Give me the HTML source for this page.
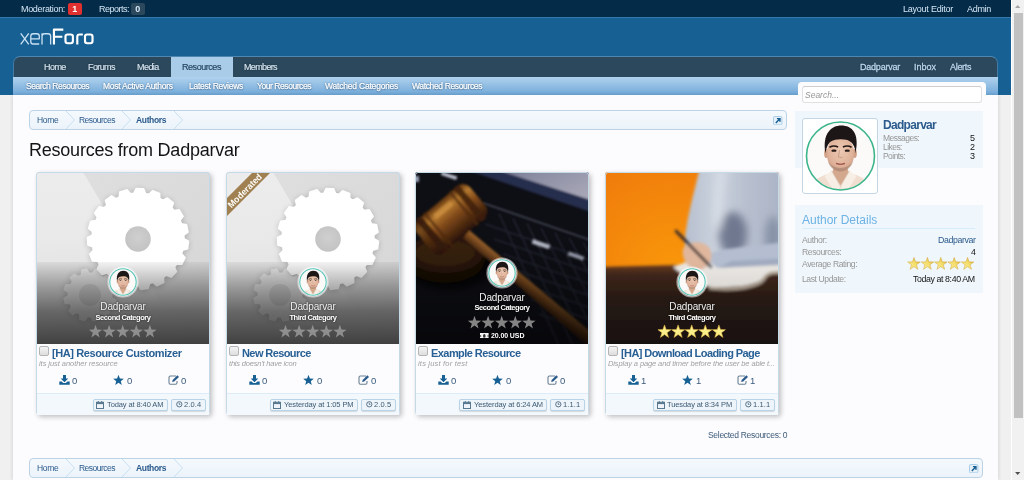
<!DOCTYPE html>
<html>
<head>
<meta charset="utf-8">
<title>Resources from Dadparvar</title>
<style>
html,body{margin:0;padding:0;}
body{width:1024px;height:480px;overflow:hidden;position:relative;background:#f0f0f0;-webkit-font-smoothing:antialiased;font-family:"Liberation Sans",sans-serif;font-size:11px;color:#141414;}
.abs{position:absolute;}
.t{position:absolute;white-space:nowrap;line-height:1;will-change:transform;}
.ovc,.bt,.badge{will-change:transform;}
#modbar{left:0;top:0;width:1011px;height:17px;background:#042b48;border-bottom:1px solid #3478ab;}
#modbar .t{color:#d4e6f5;font-size:9px;top:5px;}
.badge{position:absolute;top:3px;height:12px;width:13.5px;border-radius:2px;font-size:9px;font-weight:bold;color:#fff;text-align:center;line-height:13px;}
#header{left:0;top:18px;width:1011px;height:77px;background:#176093;}
#tabs{left:13px;top:56px;width:985px;height:21px;background:#2b485c;border-top:1px solid #4f86b0;border-radius:7px 7px 0 0;box-sizing:border-box;border-left:1px solid #447aa3;border-right:1px solid #447aa3;}
#tabs .t{color:#d6e6f2;font-size:9px;top:5.5px;-webkit-text-stroke-width:.15px;text-shadow:0 0 2px rgba(0,0,0,.6);}
#seltab{left:157px;top:0px;width:62px;height:20px;background:#a9cde9;}
#subnav{left:13px;top:77px;width:985px;height:18px;background:linear-gradient(#b0d2ee,#70a8d8);}
#subnav .t{color:#fff;font-size:8.5px;top:4.5px;-webkit-text-stroke:.25px #fff;text-shadow:0 0 2px rgba(30,70,110,.9),0 1px 1px rgba(30,70,110,.5);}
#page{left:13px;top:95px;width:985px;height:385px;background:#fcfcff;box-shadow:0 0 4px rgba(0,0,0,.15);}
#sb{left:1011px;top:0;width:12px;height:480px;background:#f1f1f1;border-left:1px solid #fff;}
#sbthumb{left:1.5px;top:13px;width:9px;height:405px;background:#c1c1c1;}
.bc{left:29px;width:755px;height:18px;background:linear-gradient(#f4f9fd,#ebf3fa);border:1px solid #bcd3e5;border-radius:4px;overflow:hidden;}
.bc .t{font-size:8.5px;color:#2b5a8c;top:5px;letter-spacing:-.3px;}
#h1{font-size:18px;color:#141414;letter-spacing:-.23px;}
/* cards */
.card{width:174px;height:242.6px;background:#fcfcff;box-shadow:2px 2px 5px rgba(0,0,0,.24);border-radius:3px;}
.cimg{left:0;top:0;width:174px;height:172px;overflow:hidden;border-radius:3px 3px 0 0;}
.cb{left:0;top:0;width:172px;height:240.6px;border:1px solid #c6d9e6;border-radius:3px;pointer-events:none;}
.ovc{left:0;width:174px;text-align:center;line-height:1;white-space:nowrap;text-shadow:0 0 2px rgba(0,0,0,.8);}
.ovt{color:#fff;text-shadow:0 0 2px rgba(0,0,0,.8);}
.ctitle{font-size:11px;font-weight:bold;color:#286094;}
.chk{left:3px;top:174px;width:7.6px;height:7.6px;border:1px solid #b4b4b4;border-radius:2px;background:linear-gradient(#f4f4f4,#dedede);}
.csub{font-size:7.5px;font-style:italic;color:#a0a0a0;}
.cnum{font-size:9.5px;color:#3a5a7c;}
.cfoot{left:1px;top:221px;width:172px;height:20.6px;background:#f2f8fc;border-top:1px solid #dcedf9;}
.btn{position:relative;float:right;height:10px;margin:5px 0 0 3.5px;padding:0 4.5px 0 0;border:1px solid #b9d3e6;border-radius:2px;background:#edf4fa;box-shadow:0 1px 1px rgba(0,0,0,.12);font-size:7.5px;line-height:10px;color:#3d5a73;white-space:nowrap;}
.btn.ver{margin-right:2.6px;}
.bt{display:inline-block;}
/* sidebar */
#searchwrap{left:798px;top:82px;width:188px;height:24px;background:#fcfcff;border-radius:4px 4px 0 0;}
#searchbox{left:4px;top:4px;width:178px;height:15px;border:1px solid #e0e0e0;border-top-color:#cdcdcd;border-radius:3px;background:#fff;}
.sblock{background:#f0f7fc;}
#bigav{left:802px;top:118px;width:74px;height:74px;border:1px solid #c4d6e4;border-radius:3px;background:#fff;}
.sl{font-size:8.5px;color:#969696;letter-spacing:-.55px;}
.sv{font-size:9px;color:#141414;}
.sl2{font-size:8.6px;color:#969696;letter-spacing:-.42px;}
.sv2{font-size:8.8px;color:#141414;letter-spacing:-.4px;}

</style>
</head>
<body>
<div id="header" class="abs"></div>
<div id="modbar" class="abs">
  <span class="t" style="left:21px;letter-spacing:-.32px;">Moderation:</span>
  <span class="badge" style="left:68px;background:#e03030;">1</span>
  <span class="t" style="left:99px;letter-spacing:-.5px;">Reports:</span>
  <span class="badge" style="left:131px;background:#2b485c;color:#d4e6f5;">0</span>
  <span class="t" style="left:903px;letter-spacing:-.23px;">Layout Editor</span>
  <span class="t" style="left:967px;letter-spacing:-.3px;">Admin</span>
</div>
<svg id="logo" class="abs" style="left:10px;top:20px;" width="100" height="36" viewBox="0 0 1024 368.6">
<g fill="none" stroke="#cbe1f4" stroke-width="13.5" stroke-linecap="butt" stroke-linejoin="round">
<path d="M110,138 L192,249 M192,138 L110,249"/>
<path d="M213,193 H300 V166 Q300,141 275,141 H238 Q213,141 213,166 V222 Q213,246 238,246 H299"/>
<path d="M328,250 V136 M328,166 Q328,141 353,141 H391 Q416,141 416,166 V250"/>
</g>
<g fill="none" stroke="#ffffff" stroke-width="22" stroke-linejoin="round">
<path d="M450,251 V98 H546 M450,172 H536"/>
<rect x="568" y="148" width="76" height="90" rx="22"/>
<path d="M689,251 V172 Q689,148 713,148 H746"/>
<rect x="768" y="148" width="77" height="90" rx="22"/>
</g>
</svg>
<div id="tabs" class="abs">
  <div id="seltab" class="abs"></div>
  <span class="t" style="left:30px;letter-spacing:-.55px;">Home</span>
  <span class="t" style="left:74px;letter-spacing:-.6px;">Forums</span>
  <span class="t" style="left:123px;letter-spacing:-.55px;">Media</span>
  <span class="t" style="left:168px;letter-spacing:-.45px;color:#1e3e58;text-shadow:none;">Resources</span>
  <span class="t" style="left:230px;letter-spacing:-.65px;">Members</span>
  <span class="t" style="left:846px;letter-spacing:-.22px;color:#b9d5ee;-webkit-text-stroke-width:.3px;">Dadparvar</span>
  <span class="t" style="left:900px;color:#b9d5ee;-webkit-text-stroke-width:.3px;">Inbox</span>
  <span class="t" style="left:936px;letter-spacing:-.3px;color:#b9d5ee;-webkit-text-stroke-width:.3px;">Alerts</span>
</div>
<div id="subnav" class="abs">
  <span class="t" style="left:13px;letter-spacing:-.42px;">Search Resources</span>
  <span class="t" style="left:90px;letter-spacing:-.26px;">Most Active Authors</span>
  <span class="t" style="left:176px;letter-spacing:-.26px;">Latest Reviews</span>
  <span class="t" style="left:244px;letter-spacing:-.44px;">Your Resources</span>
  <span class="t" style="left:312px;letter-spacing:-.2px;">Watched Categories</span>
  <span class="t" style="left:399px;letter-spacing:-.36px;">Watched Resources</span>
</div>
<div id="page" class="abs"></div>
<div class="bc abs" style="top:110px;width:756px;">
<span class="t" style="left:7px;">Home</span>
<svg class="abs" style="left:36px;top:0" width="10" height="18" viewBox="0 0 10 18"><path d="M0,0 L8.5,9 L0,18" fill="none" stroke="#c6dff0" stroke-width="1"/></svg>
<span class="t" style="left:49px;letter-spacing:-.52px;">Resources</span>
<svg class="abs" style="left:92px;top:0" width="10" height="18" viewBox="0 0 10 18"><path d="M0,0 L8.5,9 L0,18" fill="none" stroke="#c6dff0" stroke-width="1"/></svg>
<span class="t" style="left:106px;font-weight:bold;letter-spacing:-.35px;">Authors</span>
<svg class="abs" style="left:144px;top:0" width="10" height="18" viewBox="0 0 10 18"><path d="M0,0 L8.5,9 L0,18" fill="none" stroke="#c6dff0" stroke-width="1"/></svg>
<svg class="abs" style="left:743.2px;top:4.5px" width="9.4" height="9.4" viewBox="0 0 10 10"><rect x=".5" y=".5" width="9" height="9" rx="1.5" fill="#e4eff8" stroke="#a5cae4"/><path d="M3,7.5 L7,3.2 M4.2,2.8 H7.4 V6" stroke="#176093" stroke-width="1.5" fill="none"/></svg>
</div>
<span class="t" id="h1" style="left:29px;top:140.7px;">Resources from Dadparvar</span>
<div class="card abs" style="left:36px;top:172px;">
<div class="cimg abs"><svg class="abs" style="left:0;top:0" width="174" height="172" viewBox="0 0 174 172">
<defs>
<linearGradient id="gbc0" x1="0" y1="0" x2="1" y2="1"><stop offset="0" stop-color="#e0e0e0"/><stop offset="1" stop-color="#d5d5d5"/></linearGradient>
<filter id="gsc0" x="-20%" y="-20%" width="140%" height="140%"><feGaussianBlur stdDeviation="3"/></filter>
<filter id="gs2c0"><feGaussianBlur stdDeviation="0.55"/></filter>
<linearGradient id="ovc0" x1="0" y1="0" x2="0" y2="1"><stop offset="0" stop-color="#000" stop-opacity=".05"/><stop offset="0.3" stop-color="#000" stop-opacity=".31"/><stop offset="0.6" stop-color="#000" stop-opacity=".53"/><stop offset="1" stop-color="#000" stop-opacity=".7"/></linearGradient>
<linearGradient id="shnc0" x1="0" y1="0" x2="0" y2="1"><stop offset="0" stop-color="#ececec"/><stop offset=".5" stop-color="#e9e9e9"/><stop offset="1" stop-color="#e9e9e9" stop-opacity="0"/></linearGradient>
<radialGradient id="holec0" cx=".5" cy=".45" r=".6"><stop offset="0" stop-color="#cfcfcf"/><stop offset="1" stop-color="#c2c2c2"/></radialGradient>
</defs>
<rect width="174" height="172" fill="url(#gbc0)"/>
<polygon points="0,0 47,0 130,140 0,140" fill="url(#shnc0)"/>
<path d="M76.4,125.3 L80.6,127.9 L78.7,133.9 L73.8,133.8 L72.3,136.2 L74.5,140.5 L69.9,144.8 L65.7,142.2 L63.2,143.5 L63.0,148.4 L56.9,149.8 L54.6,145.5 L51.7,145.4 L49.1,149.6 L43.1,147.7 L43.2,142.8 L40.8,141.3 L36.5,143.5 L32.2,138.9 L34.8,134.7 L33.5,132.2 L28.6,132.0 L27.2,125.9 L31.5,123.6 L31.6,120.7 L27.4,118.1 L29.3,112.1 L34.2,112.2 L35.7,109.8 L33.5,105.5 L38.1,101.2 L42.3,103.8 L44.8,102.5 L45.0,97.6 L51.1,96.2 L53.4,100.5 L56.3,100.6 L58.9,96.4 L64.9,98.3 L64.8,103.2 L67.2,104.7 L71.5,102.5 L75.8,107.1 L73.2,111.3 L74.5,113.8 L79.4,114.0 L80.8,120.1 L76.5,122.4Z" fill="#000" opacity=".18" filter="url(#gsc0)"/>
<path d="M76.4,125.3 L80.6,127.9 L78.7,133.9 L73.8,133.8 L72.3,136.2 L74.5,140.5 L69.9,144.8 L65.7,142.2 L63.2,143.5 L63.0,148.4 L56.9,149.8 L54.6,145.5 L51.7,145.4 L49.1,149.6 L43.1,147.7 L43.2,142.8 L40.8,141.3 L36.5,143.5 L32.2,138.9 L34.8,134.7 L33.5,132.2 L28.6,132.0 L27.2,125.9 L31.5,123.6 L31.6,120.7 L27.4,118.1 L29.3,112.1 L34.2,112.2 L35.7,109.8 L33.5,105.5 L38.1,101.2 L42.3,103.8 L44.8,102.5 L45.0,97.6 L51.1,96.2 L53.4,100.5 L56.3,100.6 L58.9,96.4 L64.9,98.3 L64.8,103.2 L67.2,104.7 L71.5,102.5 L75.8,107.1 L73.2,111.3 L74.5,113.8 L79.4,114.0 L80.8,120.1 L76.5,122.4Z" fill="#f4f4f4" opacity=".8" filter="url(#gs2c0)"/>
<circle cx="54" cy="123" r="11" fill="#cfcfcf" opacity=".8"/>
<path d="M148.0,66.7 L152.4,69.3 L151.6,76.7 L146.6,78.2 L145.6,81.7 L149.0,85.6 L145.7,92.3 L140.6,92.1 L138.5,95.0 L140.4,99.8 L135.1,105.1 L130.3,103.2 L127.4,105.4 L127.7,110.5 L120.9,113.8 L117.0,110.5 L113.5,111.5 L112.1,116.5 L104.7,117.4 L102.1,113.0 L98.5,112.9 L95.5,117.1 L88.2,115.6 L87.2,110.5 L83.8,109.2 L79.6,112.3 L73.2,108.5 L73.8,103.4 L71.0,101.0 L66.1,102.5 L61.3,96.9 L63.5,92.3 L61.7,89.1 L56.5,89.0 L53.8,82.0 L57.4,78.4 L56.7,74.8 L51.9,73.0 L51.5,65.5 L56.1,63.3 L56.6,59.7 L52.6,56.4 L54.7,49.2 L59.8,48.6 L61.4,45.3 L58.7,41.0 L63.1,34.9 L68.1,35.9 L70.7,33.3 L69.5,28.3 L75.6,23.9 L80.0,26.6 L83.3,25.0 L83.9,19.9 L91.0,17.7 L94.3,21.6 L97.9,21.2 L100.1,16.5 L107.6,16.8 L109.5,21.6 L113.0,22.3 L116.6,18.7 L123.6,21.4 L123.8,26.5 L126.9,28.3 L131.5,26.0 L137.3,30.8 L135.8,35.8 L138.1,38.5 L143.2,37.8 L147.1,44.3 L144.1,48.4 L145.4,51.8 L150.5,52.8 L152.0,60.1 L147.8,63.1Z" fill="#000" opacity=".26" filter="url(#gsc0)" transform="translate(0,1)"/>
<path d="M148.0,66.7 L152.4,69.3 L151.6,76.7 L146.6,78.2 L145.6,81.7 L149.0,85.6 L145.7,92.3 L140.6,92.1 L138.5,95.0 L140.4,99.8 L135.1,105.1 L130.3,103.2 L127.4,105.4 L127.7,110.5 L120.9,113.8 L117.0,110.5 L113.5,111.5 L112.1,116.5 L104.7,117.4 L102.1,113.0 L98.5,112.9 L95.5,117.1 L88.2,115.6 L87.2,110.5 L83.8,109.2 L79.6,112.3 L73.2,108.5 L73.8,103.4 L71.0,101.0 L66.1,102.5 L61.3,96.9 L63.5,92.3 L61.7,89.1 L56.5,89.0 L53.8,82.0 L57.4,78.4 L56.7,74.8 L51.9,73.0 L51.5,65.5 L56.1,63.3 L56.6,59.7 L52.6,56.4 L54.7,49.2 L59.8,48.6 L61.4,45.3 L58.7,41.0 L63.1,34.9 L68.1,35.9 L70.7,33.3 L69.5,28.3 L75.6,23.9 L80.0,26.6 L83.3,25.0 L83.9,19.9 L91.0,17.7 L94.3,21.6 L97.9,21.2 L100.1,16.5 L107.6,16.8 L109.5,21.6 L113.0,22.3 L116.6,18.7 L123.6,21.4 L123.8,26.5 L126.9,28.3 L131.5,26.0 L137.3,30.8 L135.8,35.8 L138.1,38.5 L143.2,37.8 L147.1,44.3 L144.1,48.4 L145.4,51.8 L150.5,52.8 L152.0,60.1 L147.8,63.1Z" fill="#fff" stroke="#fff" stroke-width="1.6" stroke-linejoin="round" filter="url(#gs2c0)"/>
<circle cx="102" cy="67" r="12.8" fill="url(#holec0)"/>
<rect x="0" y="90" width="174" height="82" fill="url(#ovc0)"/>

</svg>
<svg class="abs" style="left:71px;top:94px" width="32" height="32" viewBox="0 0 32 32">
<defs><clipPath id="cac0"><circle cx="16" cy="16" r="12.6"/></clipPath></defs>
<circle cx="16" cy="16" r="15.6" fill="rgba(255,255,255,.55)"/>
<circle cx="16" cy="16" r="14.2" fill="#fff"/>
<g clip-path="url(#cac0)"><g transform="translate(2.5,3.6) scale(0.27)">
<g>
<defs><filter id="fbc0" x="-10%" y="-10%" width="120%" height="120%"><feGaussianBlur stdDeviation="0.9"/></filter>
<radialGradient id="skc0" cx=".5" cy=".42" r=".62"><stop offset="0" stop-color="#ecc8b3"/><stop offset=".7" stop-color="#e0b39a"/><stop offset="1" stop-color="#c99a82"/></radialGradient></defs>
<rect x="-10" y="-10" width="120" height="120" fill="#fbfaf9"/>
<g filter="url(#fbc0)">
<path d="M2,106 C4,84 20,78 38,73 L62,73 C80,78 96,84 98,106Z" fill="#f0dfd1"/>
<path d="M38,72 L50,91 L62,72 L58,60 L42,60Z" fill="#d3a88c"/>
<path d="M37,70 L50,93 L42,102 L27,78Z" fill="#f7eee6"/>
<path d="M63,70 L50,93 L58,102 L73,78Z" fill="#f7eee6"/>
<path d="M37,70 L50,93 L63,70" stroke="#d9c4b2" stroke-width="1" fill="none"/>
<ellipse cx="29.3" cy="45" rx="3" ry="6.5" fill="#d3a187"/>
<ellipse cx="70.7" cy="45" rx="3" ry="6.5" fill="#d3a187"/>
<ellipse cx="50" cy="45" rx="19.8" ry="25" fill="url(#skc0)"/>
<path d="M31,53 C33,66 42,71 50,71 C58,71 67,66 69,53 C67,61 60,66 50,66 C40,66 33,61 31,53Z" fill="#9c7866" opacity=".5"/>
<path d="M28.3,45 C23,16 37,4.5 51,4.5 C67,4.5 78,16 71.7,45 C71.5,35 67.5,28.5 60,25.5 C52,23.5 42,24 36,27.5 C31.5,31 29,38 28.3,45Z" fill="#1f1918"/>
<ellipse cx="40.5" cy="40.8" rx="3.8" ry="1.7" fill="#2a1d18"/>
<ellipse cx="59.8" cy="40.8" rx="3.8" ry="1.7" fill="#2a1d18"/>
<path d="M34,35.8 Q40.5,32.3 46.5,35.6" stroke="#231814" stroke-width="2.3" fill="none"/>
<path d="M53.5,35.6 Q59.8,32.3 66,35.8" stroke="#231814" stroke-width="2.3" fill="none"/>
<path d="M48.5,40 L47,50 Q50,52 53,50" stroke="#b88a72" stroke-width="1.2" fill="none" opacity=".8"/>
<path d="M43.5,59.3 Q50,61.8 56.5,59.3" stroke="#a0564c" stroke-width="1.8" fill="none"/>
</g>
</g></g></g>
<circle cx="16" cy="16" r="13.2" fill="none" stroke="#55c2b4" stroke-width="1.1"/>
</svg>
<div class="ovc abs" style="top:130px;font-size:10px;color:#f0f0f0;letter-spacing:-.15px;">Dadparvar</div>
<div class="ovc abs" style="top:141.8px;font-size:7.5px;font-weight:bold;color:#fff;letter-spacing:-.45px;">Second Category</div>
<svg class="abs" style="left:52px;top:152px" width="72" height="15" viewBox="0 0 72 15"><path d="M7.50,0.80 L9.15,5.53 L14.16,5.64 L10.16,8.67 L11.61,13.46 L7.50,10.60 L3.39,13.46 L4.84,8.67 L0.84,5.64 L5.85,5.53Z" fill="#9a9a9a" opacity=".85"/><path d="M21.10,0.80 L22.75,5.53 L27.76,5.64 L23.76,8.67 L25.21,13.46 L21.10,10.60 L16.99,13.46 L18.44,8.67 L14.44,5.64 L19.45,5.53Z" fill="#9a9a9a" opacity=".85"/><path d="M34.70,0.80 L36.35,5.53 L41.36,5.64 L37.36,8.67 L38.81,13.46 L34.70,10.60 L30.59,13.46 L32.04,8.67 L28.04,5.64 L33.05,5.53Z" fill="#9a9a9a" opacity=".85"/><path d="M48.30,0.80 L49.95,5.53 L54.96,5.64 L50.96,8.67 L52.41,13.46 L48.30,10.60 L44.19,13.46 L45.64,8.67 L41.64,5.64 L46.65,5.53Z" fill="#9a9a9a" opacity=".85"/><path d="M61.90,0.80 L63.55,5.53 L68.56,5.64 L64.56,8.67 L66.01,13.46 L61.90,10.60 L57.79,13.46 L59.24,8.67 L55.24,5.64 L60.25,5.53Z" fill="#9a9a9a" opacity=".85"/></svg>

</div>
<div class="cb abs"></div>
<div class="chk abs"></div>
<span class="t ctitle" style="left:16px;top:176px;letter-spacing:-0.41px;">[HA] Resource Customizer</span>
<span class="t csub" style="left:3px;top:187.5px;letter-spacing:-0.06px;">its just another resource</span>
<svg class="abs" style="left:23px;top:203px" width="11" height="10" viewBox="0 0 11 10"><path d="M4,0 H7 V3.6 H9.3 L5.5,7.3 L1.7,3.6 H4Z" fill="#176093"/><path d="M0.3,6.6 H2.6 L4.2,8.1 H6.8 L8.4,6.6 H10.7 V9.8 H0.3Z" fill="#176093"/></svg><span class="t cnum" style="left:35.6px;top:204px;">0</span>
<svg class="abs" style="left:77.4px;top:203px" width="11" height="10" viewBox="0 0 11 10"><path d="M5.50,-0.20 L6.91,3.46 L10.83,3.67 L7.78,6.14 L8.79,9.93 L5.50,7.80 L2.21,9.93 L3.22,6.14 L0.17,3.67 L4.09,3.46Z" fill="#176093"/></svg><span class="t cnum" style="left:90.6px;top:204px;">0</span>
<svg class="abs" style="left:131.5px;top:203px" width="12" height="10" viewBox="0 0 12 10"><path d="M8,1 H2.4 Q1,1 1,2.4 V7.8 Q1,9.2 2.4,9.2 H7.6 Q9,9.2 9,7.8 V6" fill="none" stroke="#6a7f90" stroke-width="1.1"/><path d="M4.2,6.9 L4.6,5 L9.4,0.3 L11,1.9 L6.2,6.6Z" fill="#2b5a8c"/></svg><span class="t cnum" style="left:145px;top:204px;">0</span>
<div class="cfoot abs">
<span class="btn ver" style="padding-right:4px;"><svg class="abs" style="left:3.6px;top:1.4px" width="6.6" height="6.6" viewBox="0 0 8 8"><circle cx="4" cy="4" r="3.2" fill="none" stroke="#3d5a73" stroke-width="1"/><path d="M4,2.2 V4.2 H5.4" stroke="#3d5a73" stroke-width=".9" fill="none"/></svg><span class="bt" style="margin-left:11.8px;letter-spacing:.1px;">2.0.4</span></span>
<span class="btn date" style="padding-right:3.4px;"><svg class="abs" style="left:2.6px;top:0.8px" width="8" height="8" viewBox="0 0 8 8"><rect x=".5" y="1.3" width="7" height="6.2" fill="#eef4f9" stroke="#587890" stroke-width="1"/><rect x=".5" y="1.3" width="7" height="1.8" fill="#587890"/><rect x="1.8" y="0" width="1" height="2" fill="#587890"/><rect x="5.2" y="0" width="1" height="2" fill="#587890"/></svg><span class="bt" style="margin-left:13.4px;letter-spacing:-.1px;">Today at 8:40 AM</span></span>
</div>
</div><div class="card abs" style="left:226px;top:172px;">
<div class="cimg abs"><svg class="abs" style="left:0;top:0" width="174" height="172" viewBox="0 0 174 172">
<defs>
<linearGradient id="gbc1" x1="0" y1="0" x2="1" y2="1"><stop offset="0" stop-color="#e0e0e0"/><stop offset="1" stop-color="#d5d5d5"/></linearGradient>
<filter id="gsc1" x="-20%" y="-20%" width="140%" height="140%"><feGaussianBlur stdDeviation="3"/></filter>
<filter id="gs2c1"><feGaussianBlur stdDeviation="0.55"/></filter>
<linearGradient id="ovc1" x1="0" y1="0" x2="0" y2="1"><stop offset="0" stop-color="#000" stop-opacity=".05"/><stop offset="0.3" stop-color="#000" stop-opacity=".31"/><stop offset="0.6" stop-color="#000" stop-opacity=".53"/><stop offset="1" stop-color="#000" stop-opacity=".7"/></linearGradient>
<linearGradient id="shnc1" x1="0" y1="0" x2="0" y2="1"><stop offset="0" stop-color="#ececec"/><stop offset=".5" stop-color="#e9e9e9"/><stop offset="1" stop-color="#e9e9e9" stop-opacity="0"/></linearGradient>
<radialGradient id="holec1" cx=".5" cy=".45" r=".6"><stop offset="0" stop-color="#cfcfcf"/><stop offset="1" stop-color="#c2c2c2"/></radialGradient>
</defs>
<rect width="174" height="172" fill="url(#gbc1)"/>
<polygon points="0,0 47,0 130,140 0,140" fill="url(#shnc1)"/>
<path d="M76.4,125.3 L80.6,127.9 L78.7,133.9 L73.8,133.8 L72.3,136.2 L74.5,140.5 L69.9,144.8 L65.7,142.2 L63.2,143.5 L63.0,148.4 L56.9,149.8 L54.6,145.5 L51.7,145.4 L49.1,149.6 L43.1,147.7 L43.2,142.8 L40.8,141.3 L36.5,143.5 L32.2,138.9 L34.8,134.7 L33.5,132.2 L28.6,132.0 L27.2,125.9 L31.5,123.6 L31.6,120.7 L27.4,118.1 L29.3,112.1 L34.2,112.2 L35.7,109.8 L33.5,105.5 L38.1,101.2 L42.3,103.8 L44.8,102.5 L45.0,97.6 L51.1,96.2 L53.4,100.5 L56.3,100.6 L58.9,96.4 L64.9,98.3 L64.8,103.2 L67.2,104.7 L71.5,102.5 L75.8,107.1 L73.2,111.3 L74.5,113.8 L79.4,114.0 L80.8,120.1 L76.5,122.4Z" fill="#000" opacity=".18" filter="url(#gsc1)"/>
<path d="M76.4,125.3 L80.6,127.9 L78.7,133.9 L73.8,133.8 L72.3,136.2 L74.5,140.5 L69.9,144.8 L65.7,142.2 L63.2,143.5 L63.0,148.4 L56.9,149.8 L54.6,145.5 L51.7,145.4 L49.1,149.6 L43.1,147.7 L43.2,142.8 L40.8,141.3 L36.5,143.5 L32.2,138.9 L34.8,134.7 L33.5,132.2 L28.6,132.0 L27.2,125.9 L31.5,123.6 L31.6,120.7 L27.4,118.1 L29.3,112.1 L34.2,112.2 L35.7,109.8 L33.5,105.5 L38.1,101.2 L42.3,103.8 L44.8,102.5 L45.0,97.6 L51.1,96.2 L53.4,100.5 L56.3,100.6 L58.9,96.4 L64.9,98.3 L64.8,103.2 L67.2,104.7 L71.5,102.5 L75.8,107.1 L73.2,111.3 L74.5,113.8 L79.4,114.0 L80.8,120.1 L76.5,122.4Z" fill="#f4f4f4" opacity=".8" filter="url(#gs2c1)"/>
<circle cx="54" cy="123" r="11" fill="#cfcfcf" opacity=".8"/>
<path d="M148.0,66.7 L152.4,69.3 L151.6,76.7 L146.6,78.2 L145.6,81.7 L149.0,85.6 L145.7,92.3 L140.6,92.1 L138.5,95.0 L140.4,99.8 L135.1,105.1 L130.3,103.2 L127.4,105.4 L127.7,110.5 L120.9,113.8 L117.0,110.5 L113.5,111.5 L112.1,116.5 L104.7,117.4 L102.1,113.0 L98.5,112.9 L95.5,117.1 L88.2,115.6 L87.2,110.5 L83.8,109.2 L79.6,112.3 L73.2,108.5 L73.8,103.4 L71.0,101.0 L66.1,102.5 L61.3,96.9 L63.5,92.3 L61.7,89.1 L56.5,89.0 L53.8,82.0 L57.4,78.4 L56.7,74.8 L51.9,73.0 L51.5,65.5 L56.1,63.3 L56.6,59.7 L52.6,56.4 L54.7,49.2 L59.8,48.6 L61.4,45.3 L58.7,41.0 L63.1,34.9 L68.1,35.9 L70.7,33.3 L69.5,28.3 L75.6,23.9 L80.0,26.6 L83.3,25.0 L83.9,19.9 L91.0,17.7 L94.3,21.6 L97.9,21.2 L100.1,16.5 L107.6,16.8 L109.5,21.6 L113.0,22.3 L116.6,18.7 L123.6,21.4 L123.8,26.5 L126.9,28.3 L131.5,26.0 L137.3,30.8 L135.8,35.8 L138.1,38.5 L143.2,37.8 L147.1,44.3 L144.1,48.4 L145.4,51.8 L150.5,52.8 L152.0,60.1 L147.8,63.1Z" fill="#000" opacity=".26" filter="url(#gsc1)" transform="translate(0,1)"/>
<path d="M148.0,66.7 L152.4,69.3 L151.6,76.7 L146.6,78.2 L145.6,81.7 L149.0,85.6 L145.7,92.3 L140.6,92.1 L138.5,95.0 L140.4,99.8 L135.1,105.1 L130.3,103.2 L127.4,105.4 L127.7,110.5 L120.9,113.8 L117.0,110.5 L113.5,111.5 L112.1,116.5 L104.7,117.4 L102.1,113.0 L98.5,112.9 L95.5,117.1 L88.2,115.6 L87.2,110.5 L83.8,109.2 L79.6,112.3 L73.2,108.5 L73.8,103.4 L71.0,101.0 L66.1,102.5 L61.3,96.9 L63.5,92.3 L61.7,89.1 L56.5,89.0 L53.8,82.0 L57.4,78.4 L56.7,74.8 L51.9,73.0 L51.5,65.5 L56.1,63.3 L56.6,59.7 L52.6,56.4 L54.7,49.2 L59.8,48.6 L61.4,45.3 L58.7,41.0 L63.1,34.9 L68.1,35.9 L70.7,33.3 L69.5,28.3 L75.6,23.9 L80.0,26.6 L83.3,25.0 L83.9,19.9 L91.0,17.7 L94.3,21.6 L97.9,21.2 L100.1,16.5 L107.6,16.8 L109.5,21.6 L113.0,22.3 L116.6,18.7 L123.6,21.4 L123.8,26.5 L126.9,28.3 L131.5,26.0 L137.3,30.8 L135.8,35.8 L138.1,38.5 L143.2,37.8 L147.1,44.3 L144.1,48.4 L145.4,51.8 L150.5,52.8 L152.0,60.1 L147.8,63.1Z" fill="#fff" stroke="#fff" stroke-width="1.6" stroke-linejoin="round" filter="url(#gs2c1)"/>
<circle cx="102" cy="67" r="12.8" fill="url(#holec1)"/>
<rect x="0" y="90" width="174" height="82" fill="url(#ovc1)"/>
<polygon points="0,27 27,0 45,0 0,45" fill="#a08050"/>
<text x="0" y="0" transform="translate(5.5,36.5) rotate(-45)" font-family="Liberation Sans, sans-serif" font-weight="bold" font-size="9" fill="#fff" textLength="44" lengthAdjust="spacingAndGlyphs">Moderated</text>
</svg>
<svg class="abs" style="left:71px;top:94px" width="32" height="32" viewBox="0 0 32 32">
<defs><clipPath id="cac1"><circle cx="16" cy="16" r="12.6"/></clipPath></defs>
<circle cx="16" cy="16" r="15.6" fill="rgba(255,255,255,.55)"/>
<circle cx="16" cy="16" r="14.2" fill="#fff"/>
<g clip-path="url(#cac1)"><g transform="translate(2.5,3.6) scale(0.27)">
<g>
<defs><filter id="fbc1" x="-10%" y="-10%" width="120%" height="120%"><feGaussianBlur stdDeviation="0.9"/></filter>
<radialGradient id="skc1" cx=".5" cy=".42" r=".62"><stop offset="0" stop-color="#ecc8b3"/><stop offset=".7" stop-color="#e0b39a"/><stop offset="1" stop-color="#c99a82"/></radialGradient></defs>
<rect x="-10" y="-10" width="120" height="120" fill="#fbfaf9"/>
<g filter="url(#fbc1)">
<path d="M2,106 C4,84 20,78 38,73 L62,73 C80,78 96,84 98,106Z" fill="#f0dfd1"/>
<path d="M38,72 L50,91 L62,72 L58,60 L42,60Z" fill="#d3a88c"/>
<path d="M37,70 L50,93 L42,102 L27,78Z" fill="#f7eee6"/>
<path d="M63,70 L50,93 L58,102 L73,78Z" fill="#f7eee6"/>
<path d="M37,70 L50,93 L63,70" stroke="#d9c4b2" stroke-width="1" fill="none"/>
<ellipse cx="29.3" cy="45" rx="3" ry="6.5" fill="#d3a187"/>
<ellipse cx="70.7" cy="45" rx="3" ry="6.5" fill="#d3a187"/>
<ellipse cx="50" cy="45" rx="19.8" ry="25" fill="url(#skc1)"/>
<path d="M31,53 C33,66 42,71 50,71 C58,71 67,66 69,53 C67,61 60,66 50,66 C40,66 33,61 31,53Z" fill="#9c7866" opacity=".5"/>
<path d="M28.3,45 C23,16 37,4.5 51,4.5 C67,4.5 78,16 71.7,45 C71.5,35 67.5,28.5 60,25.5 C52,23.5 42,24 36,27.5 C31.5,31 29,38 28.3,45Z" fill="#1f1918"/>
<ellipse cx="40.5" cy="40.8" rx="3.8" ry="1.7" fill="#2a1d18"/>
<ellipse cx="59.8" cy="40.8" rx="3.8" ry="1.7" fill="#2a1d18"/>
<path d="M34,35.8 Q40.5,32.3 46.5,35.6" stroke="#231814" stroke-width="2.3" fill="none"/>
<path d="M53.5,35.6 Q59.8,32.3 66,35.8" stroke="#231814" stroke-width="2.3" fill="none"/>
<path d="M48.5,40 L47,50 Q50,52 53,50" stroke="#b88a72" stroke-width="1.2" fill="none" opacity=".8"/>
<path d="M43.5,59.3 Q50,61.8 56.5,59.3" stroke="#a0564c" stroke-width="1.8" fill="none"/>
</g>
</g></g></g>
<circle cx="16" cy="16" r="13.2" fill="none" stroke="#55c2b4" stroke-width="1.1"/>
</svg>
<div class="ovc abs" style="top:130px;font-size:10px;color:#f0f0f0;letter-spacing:-.15px;">Dadparvar</div>
<div class="ovc abs" style="top:141.8px;font-size:7.5px;font-weight:bold;color:#fff;letter-spacing:-.45px;">Third Category</div>
<svg class="abs" style="left:52px;top:152px" width="72" height="15" viewBox="0 0 72 15"><path d="M7.50,0.80 L9.15,5.53 L14.16,5.64 L10.16,8.67 L11.61,13.46 L7.50,10.60 L3.39,13.46 L4.84,8.67 L0.84,5.64 L5.85,5.53Z" fill="#9a9a9a" opacity=".85"/><path d="M21.10,0.80 L22.75,5.53 L27.76,5.64 L23.76,8.67 L25.21,13.46 L21.10,10.60 L16.99,13.46 L18.44,8.67 L14.44,5.64 L19.45,5.53Z" fill="#9a9a9a" opacity=".85"/><path d="M34.70,0.80 L36.35,5.53 L41.36,5.64 L37.36,8.67 L38.81,13.46 L34.70,10.60 L30.59,13.46 L32.04,8.67 L28.04,5.64 L33.05,5.53Z" fill="#9a9a9a" opacity=".85"/><path d="M48.30,0.80 L49.95,5.53 L54.96,5.64 L50.96,8.67 L52.41,13.46 L48.30,10.60 L44.19,13.46 L45.64,8.67 L41.64,5.64 L46.65,5.53Z" fill="#9a9a9a" opacity=".85"/><path d="M61.90,0.80 L63.55,5.53 L68.56,5.64 L64.56,8.67 L66.01,13.46 L61.90,10.60 L57.79,13.46 L59.24,8.67 L55.24,5.64 L60.25,5.53Z" fill="#9a9a9a" opacity=".85"/></svg>

</div>
<div class="cb abs"></div>
<div class="chk abs"></div>
<span class="t ctitle" style="left:16px;top:176px;letter-spacing:-0.59px;">New Resource</span>
<span class="t csub" style="left:3px;top:187.5px;letter-spacing:-0.2px;">this doesn't have icon</span>
<svg class="abs" style="left:23px;top:203px" width="11" height="10" viewBox="0 0 11 10"><path d="M4,0 H7 V3.6 H9.3 L5.5,7.3 L1.7,3.6 H4Z" fill="#176093"/><path d="M0.3,6.6 H2.6 L4.2,8.1 H6.8 L8.4,6.6 H10.7 V9.8 H0.3Z" fill="#176093"/></svg><span class="t cnum" style="left:35.6px;top:204px;">0</span>
<svg class="abs" style="left:77.4px;top:203px" width="11" height="10" viewBox="0 0 11 10"><path d="M5.50,-0.20 L6.91,3.46 L10.83,3.67 L7.78,6.14 L8.79,9.93 L5.50,7.80 L2.21,9.93 L3.22,6.14 L0.17,3.67 L4.09,3.46Z" fill="#176093"/></svg><span class="t cnum" style="left:90.6px;top:204px;">0</span>
<svg class="abs" style="left:131.5px;top:203px" width="12" height="10" viewBox="0 0 12 10"><path d="M8,1 H2.4 Q1,1 1,2.4 V7.8 Q1,9.2 2.4,9.2 H7.6 Q9,9.2 9,7.8 V6" fill="none" stroke="#6a7f90" stroke-width="1.1"/><path d="M4.2,6.9 L4.6,5 L9.4,0.3 L11,1.9 L6.2,6.6Z" fill="#2b5a8c"/></svg><span class="t cnum" style="left:145px;top:204px;">0</span>
<div class="cfoot abs">
<span class="btn ver" style="padding-right:4px;"><svg class="abs" style="left:3.6px;top:1.4px" width="6.6" height="6.6" viewBox="0 0 8 8"><circle cx="4" cy="4" r="3.2" fill="none" stroke="#3d5a73" stroke-width="1"/><path d="M4,2.2 V4.2 H5.4" stroke="#3d5a73" stroke-width=".9" fill="none"/></svg><span class="bt" style="margin-left:11.8px;letter-spacing:.1px;">2.0.5</span></span>
<span class="btn date" style="padding-right:3.4px;"><svg class="abs" style="left:2.6px;top:0.8px" width="8" height="8" viewBox="0 0 8 8"><rect x=".5" y="1.3" width="7" height="6.2" fill="#eef4f9" stroke="#587890" stroke-width="1"/><rect x=".5" y="1.3" width="7" height="1.8" fill="#587890"/><rect x="1.8" y="0" width="1" height="2" fill="#587890"/><rect x="5.2" y="0" width="1" height="2" fill="#587890"/></svg><span class="bt" style="margin-left:13.4px;letter-spacing:-.1px;">Yesterday at 1:05 PM</span></span>
</div>
</div><div class="card abs" style="left:415px;top:172px;">
<div class="cimg abs"><svg class="abs" style="left:0;top:0" width="174" height="172" viewBox="0 0 174 172">
<defs>
<filter id="b1c2" x="-10%" y="-10%" width="120%" height="120%"><feGaussianBlur stdDeviation="1.3"/></filter>
<filter id="b2c2" x="-10%" y="-10%" width="120%" height="120%"><feGaussianBlur stdDeviation="1.0"/></filter>
<filter id="b3c2" x="-20%" y="-20%" width="140%" height="140%"><feGaussianBlur stdDeviation="3"/></filter>
<linearGradient id="scrc2" x1="0" y1="0" x2="1" y2=".6"><stop offset="0" stop-color="#6a6d88"/><stop offset=".4" stop-color="#8b8da3"/><stop offset="1" stop-color="#a6a6b6"/></linearGradient>
<linearGradient id="hdc2" x1="0" y1="0" x2="0" y2="1"><stop offset="0" stop-color="#5a300e"/><stop offset=".22" stop-color="#b67a30"/><stop offset=".5" stop-color="#80491a"/><stop offset="1" stop-color="#281306"/></linearGradient>
<linearGradient id="hnc2" x1="0" y1="0" x2="0" y2="1"><stop offset="0" stop-color="#a66a2c"/><stop offset=".5" stop-color="#7a481d"/><stop offset="1" stop-color="#3c200c"/></linearGradient>
<linearGradient id="hfc2" x1="0" y1="0" x2="1" y2="0"><stop offset="0" stop-color="#fff" stop-opacity="0"/><stop offset=".45" stop-color="#000" stop-opacity=".1"/><stop offset="1" stop-color="#000" stop-opacity=".55"/></linearGradient>
<linearGradient id="ovc2" x1="0" y1="0" x2="0" y2="1"><stop offset="0" stop-color="#000" stop-opacity="0"/><stop offset="1" stop-color="#000" stop-opacity=".5"/></linearGradient>
</defs>
<rect width="174" height="172" fill="#0e0f15"/>
<g filter="url(#b1c2)">
<polygon points="46,-4 182,-4 182,42" fill="#262d4e"/>
<polygon points="76,-4 182,-4 182,30" fill="url(#scrc2)"/>
<rect x="26" y="2" width="16" height="3.5" fill="#b9bdcc" transform="rotate(18 34 4)"/>
<rect x="-2" y="4" width="6" height="6" fill="#9aa0b5"/>
<line x1="68" y1="31" x2="178" y2="69" stroke="#5d6172" stroke-width="1.1"/>
<g stroke="#2e3242" stroke-width="1.5" opacity=".6"><line x1="70" y1="52" x2="180" y2="89.9"/><line x1="79" y1="67" x2="180" y2="101.8"/><line x1="88" y1="82" x2="180" y2="113.7"/><line x1="97" y1="97" x2="180" y2="125.6"/><line x1="106" y1="112" x2="180" y2="137.5"/><line x1="115" y1="127" x2="180" y2="149.4"/><line x1="124" y1="142" x2="180" y2="161.3"/><line x1="84" y1="41.5" x2="146" y2="178"/><line x1="98" y1="46.4" x2="160" y2="178"/><line x1="112" y1="51.2" x2="174" y2="178"/><line x1="126" y1="56.0" x2="188" y2="178"/><line x1="140" y1="60.8" x2="202" y2="178"/><line x1="154" y1="65.7" x2="216" y2="178"/><line x1="168" y1="70.5" x2="230" y2="178"/><line x1="182" y1="75.3" x2="244" y2="178"/><line x1="196" y1="80.2" x2="258" y2="178"/></g>
<rect x="117" y="70" width="18" height="4.5" fill="#b9bccb" transform="rotate(19 126 72)"/>
<rect x="153" y="82" width="16" height="4" fill="#9da1b3" transform="rotate(19 161 84)"/>
</g>
<g filter="url(#b3c2)"><ellipse cx="34" cy="90" rx="46" ry="28" fill="#000" opacity=".7"/></g>
<g filter="url(#b2c2)">
<ellipse cx="30" cy="88" rx="40" ry="23" fill="#140a05"/>
<ellipse cx="30" cy="82" rx="38" ry="19" fill="#2c180b"/>
<ellipse cx="30" cy="81" rx="30" ry="13" fill="#38200f"/>
<g transform="translate(51,62) rotate(40.5)"><polygon points="0,-5 170,-6.5 170,6.5 0,5" fill="url(#hnc2)"/><polygon points="0,-5 170,-6.5 170,6.5 0,5" fill="url(#hfc2)"/></g>
<g transform="translate(36,47) rotate(-40)">
<rect x="-35" y="-21" width="70" height="42" rx="9" fill="url(#hdc2)"/>
<rect x="-28" y="-22" width="7" height="44" rx="2" fill="#3e200c" opacity=".85"/>
<rect x="-18" y="-22" width="3" height="44" fill="#4f2a10" opacity=".7"/>
<rect x="21" y="-22" width="7" height="44" rx="2" fill="#3e200c" opacity=".85"/>
<rect x="15" y="-22" width="3" height="44" fill="#4f2a10" opacity=".7"/>
<rect x="-11" y="-15" width="22" height="6" fill="#dfa04c" opacity=".5"/>
<rect x="-35" y="-21" width="14" height="42" rx="6" fill="#2a1407" opacity=".45"/>
</g>
</g>
<rect x="0" y="60" width="174" height="112" fill="url(#ovc2)"/>
</svg>
<svg class="abs" style="left:71px;top:84.5px" width="32" height="32" viewBox="0 0 32 32">
<defs><clipPath id="cac2"><circle cx="16" cy="16" r="12.6"/></clipPath></defs>
<circle cx="16" cy="16" r="15.6" fill="rgba(255,255,255,.55)"/>
<circle cx="16" cy="16" r="14.2" fill="#fff"/>
<g clip-path="url(#cac2)"><g transform="translate(2.5,3.6) scale(0.27)">
<g>
<defs><filter id="fbc2" x="-10%" y="-10%" width="120%" height="120%"><feGaussianBlur stdDeviation="0.9"/></filter>
<radialGradient id="skc2" cx=".5" cy=".42" r=".62"><stop offset="0" stop-color="#ecc8b3"/><stop offset=".7" stop-color="#e0b39a"/><stop offset="1" stop-color="#c99a82"/></radialGradient></defs>
<rect x="-10" y="-10" width="120" height="120" fill="#fbfaf9"/>
<g filter="url(#fbc2)">
<path d="M2,106 C4,84 20,78 38,73 L62,73 C80,78 96,84 98,106Z" fill="#f0dfd1"/>
<path d="M38,72 L50,91 L62,72 L58,60 L42,60Z" fill="#d3a88c"/>
<path d="M37,70 L50,93 L42,102 L27,78Z" fill="#f7eee6"/>
<path d="M63,70 L50,93 L58,102 L73,78Z" fill="#f7eee6"/>
<path d="M37,70 L50,93 L63,70" stroke="#d9c4b2" stroke-width="1" fill="none"/>
<ellipse cx="29.3" cy="45" rx="3" ry="6.5" fill="#d3a187"/>
<ellipse cx="70.7" cy="45" rx="3" ry="6.5" fill="#d3a187"/>
<ellipse cx="50" cy="45" rx="19.8" ry="25" fill="url(#skc2)"/>
<path d="M31,53 C33,66 42,71 50,71 C58,71 67,66 69,53 C67,61 60,66 50,66 C40,66 33,61 31,53Z" fill="#9c7866" opacity=".5"/>
<path d="M28.3,45 C23,16 37,4.5 51,4.5 C67,4.5 78,16 71.7,45 C71.5,35 67.5,28.5 60,25.5 C52,23.5 42,24 36,27.5 C31.5,31 29,38 28.3,45Z" fill="#1f1918"/>
<ellipse cx="40.5" cy="40.8" rx="3.8" ry="1.7" fill="#2a1d18"/>
<ellipse cx="59.8" cy="40.8" rx="3.8" ry="1.7" fill="#2a1d18"/>
<path d="M34,35.8 Q40.5,32.3 46.5,35.6" stroke="#231814" stroke-width="2.3" fill="none"/>
<path d="M53.5,35.6 Q59.8,32.3 66,35.8" stroke="#231814" stroke-width="2.3" fill="none"/>
<path d="M48.5,40 L47,50 Q50,52 53,50" stroke="#b88a72" stroke-width="1.2" fill="none" opacity=".8"/>
<path d="M43.5,59.3 Q50,61.8 56.5,59.3" stroke="#a0564c" stroke-width="1.8" fill="none"/>
</g>
</g></g></g>
<circle cx="16" cy="16" r="13.2" fill="none" stroke="#55c2b4" stroke-width="1.1"/>
</svg>
<div class="ovc abs" style="top:120.5px;font-size:10px;color:#f0f0f0;letter-spacing:-.15px;">Dadparvar</div>
<div class="ovc abs" style="top:132.3px;font-size:7.5px;font-weight:bold;color:#fff;letter-spacing:-.45px;">Second Category</div>
<svg class="abs" style="left:52px;top:142.5px" width="72" height="15" viewBox="0 0 72 15"><path d="M7.50,0.80 L9.15,5.53 L14.16,5.64 L10.16,8.67 L11.61,13.46 L7.50,10.60 L3.39,13.46 L4.84,8.67 L0.84,5.64 L5.85,5.53Z" fill="#9a9a9a" opacity=".85"/><path d="M21.10,0.80 L22.75,5.53 L27.76,5.64 L23.76,8.67 L25.21,13.46 L21.10,10.60 L16.99,13.46 L18.44,8.67 L14.44,5.64 L19.45,5.53Z" fill="#9a9a9a" opacity=".85"/><path d="M34.70,0.80 L36.35,5.53 L41.36,5.64 L37.36,8.67 L38.81,13.46 L34.70,10.60 L30.59,13.46 L32.04,8.67 L28.04,5.64 L33.05,5.53Z" fill="#9a9a9a" opacity=".85"/><path d="M48.30,0.80 L49.95,5.53 L54.96,5.64 L50.96,8.67 L52.41,13.46 L48.30,10.60 L44.19,13.46 L45.64,8.67 L41.64,5.64 L46.65,5.53Z" fill="#9a9a9a" opacity=".85"/><path d="M61.90,0.80 L63.55,5.53 L68.56,5.64 L64.56,8.67 L66.01,13.46 L61.90,10.60 L57.79,13.46 L59.24,8.67 L55.24,5.64 L60.25,5.53Z" fill="#9a9a9a" opacity=".85"/></svg>
<svg class="abs" style="left:65.3px;top:160.6px" width="8.6" height="5.8" viewBox="0 0 8.6 5.8"><rect x="0" y="0" width="8.6" height="5.8" fill="#f4f4f4"/><ellipse cx="4.3" cy="2.9" rx="1.3" ry="1.9" fill="#333"/><path d="M0,1.9 L1.6,2.9 L0,3.9Z M8.6,1.9 L7,2.9 L8.6,3.9Z" fill="#333"/></svg>
<span class="t ovt" style="left:75.8px;top:160px;font-size:7px;font-weight:bold;letter-spacing:-.1px;">20.00 USD</span>
</div>
<div class="cb abs"></div>
<div class="chk abs"></div>
<span class="t ctitle" style="left:16px;top:176px;letter-spacing:-0.56px;">Example Resource</span>
<span class="t csub" style="left:3px;top:187.5px;letter-spacing:0.19px;">its just for test</span>
<svg class="abs" style="left:23px;top:203px" width="11" height="10" viewBox="0 0 11 10"><path d="M4,0 H7 V3.6 H9.3 L5.5,7.3 L1.7,3.6 H4Z" fill="#176093"/><path d="M0.3,6.6 H2.6 L4.2,8.1 H6.8 L8.4,6.6 H10.7 V9.8 H0.3Z" fill="#176093"/></svg><span class="t cnum" style="left:35.6px;top:204px;">0</span>
<svg class="abs" style="left:77.4px;top:203px" width="11" height="10" viewBox="0 0 11 10"><path d="M5.50,-0.20 L6.91,3.46 L10.83,3.67 L7.78,6.14 L8.79,9.93 L5.50,7.80 L2.21,9.93 L3.22,6.14 L0.17,3.67 L4.09,3.46Z" fill="#176093"/></svg><span class="t cnum" style="left:90.6px;top:204px;">0</span>
<svg class="abs" style="left:131.5px;top:203px" width="12" height="10" viewBox="0 0 12 10"><path d="M8,1 H2.4 Q1,1 1,2.4 V7.8 Q1,9.2 2.4,9.2 H7.6 Q9,9.2 9,7.8 V6" fill="none" stroke="#6a7f90" stroke-width="1.1"/><path d="M4.2,6.9 L4.6,5 L9.4,0.3 L11,1.9 L6.2,6.6Z" fill="#2b5a8c"/></svg><span class="t cnum" style="left:145px;top:204px;">0</span>
<div class="cfoot abs">
<span class="btn ver" style="padding-right:4px;"><svg class="abs" style="left:3.6px;top:1.4px" width="6.6" height="6.6" viewBox="0 0 8 8"><circle cx="4" cy="4" r="3.2" fill="none" stroke="#3d5a73" stroke-width="1"/><path d="M4,2.2 V4.2 H5.4" stroke="#3d5a73" stroke-width=".9" fill="none"/></svg><span class="bt" style="margin-left:11.8px;letter-spacing:.1px;">1.1.1</span></span>
<span class="btn date" style="padding-right:3.4px;"><svg class="abs" style="left:2.6px;top:0.8px" width="8" height="8" viewBox="0 0 8 8"><rect x=".5" y="1.3" width="7" height="6.2" fill="#eef4f9" stroke="#587890" stroke-width="1"/><rect x=".5" y="1.3" width="7" height="1.8" fill="#587890"/><rect x="1.8" y="0" width="1" height="2" fill="#587890"/><rect x="5.2" y="0" width="1" height="2" fill="#587890"/></svg><span class="bt" style="margin-left:13.4px;letter-spacing:-.1px;">Yesterday at 6:24 AM</span></span>
</div>
</div><div class="card abs" style="left:605px;top:172px;">
<div class="cimg abs"><svg class="abs" style="left:0;top:0" width="174" height="172" viewBox="0 0 174 172">
<defs>
<filter id="b1c3" x="-10%" y="-10%" width="120%" height="120%"><feGaussianBlur stdDeviation="1.4"/></filter>
<filter id="b3c3" x="-30%" y="-30%" width="160%" height="160%"><feGaussianBlur stdDeviation="4"/></filter>
<radialGradient id="orc3" cx=".38" cy=".55" r=".7"><stop offset="0" stop-color="#f9960a"/><stop offset="1" stop-color="#ef7a0c"/></radialGradient>
<linearGradient id="shc3" x1="0" y1="0" x2="1" y2="0"><stop offset="0" stop-color="#b6bfce"/><stop offset=".3" stop-color="#cbd2dd"/><stop offset=".6" stop-color="#b8c0cf"/><stop offset="1" stop-color="#a9b2c4"/></linearGradient>
<linearGradient id="dkc3" x1="0" y1="0" x2="0" y2="1"><stop offset="0" stop-color="#6e3c1e"/><stop offset=".12" stop-color="#40261a"/><stop offset=".4" stop-color="#2a1c17"/><stop offset="1" stop-color="#1c1513"/></linearGradient>
<linearGradient id="ovc3" x1="0" y1="0" x2="0" y2="1"><stop offset="0" stop-color="#000" stop-opacity="0"/><stop offset="1" stop-color="#000" stop-opacity=".2"/></linearGradient>
</defs>
<rect width="174" height="172" fill="url(#orc3)"/>
<g filter="url(#b1c3)">
<path d="M95,-4 L182,-4 L182,104 L90,104 C82,86 78,70 81,58 C84,38 90,16 95,-4Z" fill="url(#shc3)"/>
</g>
<g filter="url(#b3c3)">
<ellipse cx="128" cy="62" rx="14" ry="22" fill="#545e78" opacity=".75"/>
<ellipse cx="168" cy="66" rx="8" ry="22" fill="#6d7891" opacity=".6"/>
<path d="M118,-4 C114,20 112,40 114,56" stroke="#e6ebf2" stroke-width="7" fill="none" opacity=".6"/>
</g>
<g filter="url(#b1c3)">
<polygon points="-4,95 72,93 182,92 182,180 -4,180" fill="url(#dkc3)"/>
<path d="M68,95 L98,84 L182,80 L182,99 C170,100 162,100 158,106 C154,113 130,116 106,115 C92,112 78,104 68,95Z" fill="#ebe8e4"/>
<path d="M104,116 C130,119 154,115 159,107 C162,100 170,100 182,101" stroke="#b3a594" stroke-width="3.2" fill="none"/>
<path d="M182,70 L130,76 C114,78 104,80 100,86 L112,96 L182,92Z" fill="#b4bed0"/>
<path d="M182,86 L126,89 L114,96 L182,93Z" fill="#8a95ad" opacity=".45"/>
<path d="M78,77 C84,68 99,68 105,77 C109,86 105,96 94,98 C84,98 76,88 78,77Z" fill="#e0b79d"/>
<line x1="71" y1="59" x2="106" y2="95" stroke="#26222c" stroke-width="2.6" stroke-linecap="round"/>
</g>
<rect x="0" y="90" width="174" height="82" fill="url(#ovc3)"/>
</svg>
<svg class="abs" style="left:71px;top:94px" width="32" height="32" viewBox="0 0 32 32">
<defs><clipPath id="cac3"><circle cx="16" cy="16" r="12.6"/></clipPath></defs>
<circle cx="16" cy="16" r="15.6" fill="rgba(255,255,255,.55)"/>
<circle cx="16" cy="16" r="14.2" fill="#fff"/>
<g clip-path="url(#cac3)"><g transform="translate(2.5,3.6) scale(0.27)">
<g>
<defs><filter id="fbc3" x="-10%" y="-10%" width="120%" height="120%"><feGaussianBlur stdDeviation="0.9"/></filter>
<radialGradient id="skc3" cx=".5" cy=".42" r=".62"><stop offset="0" stop-color="#ecc8b3"/><stop offset=".7" stop-color="#e0b39a"/><stop offset="1" stop-color="#c99a82"/></radialGradient></defs>
<rect x="-10" y="-10" width="120" height="120" fill="#fbfaf9"/>
<g filter="url(#fbc3)">
<path d="M2,106 C4,84 20,78 38,73 L62,73 C80,78 96,84 98,106Z" fill="#f0dfd1"/>
<path d="M38,72 L50,91 L62,72 L58,60 L42,60Z" fill="#d3a88c"/>
<path d="M37,70 L50,93 L42,102 L27,78Z" fill="#f7eee6"/>
<path d="M63,70 L50,93 L58,102 L73,78Z" fill="#f7eee6"/>
<path d="M37,70 L50,93 L63,70" stroke="#d9c4b2" stroke-width="1" fill="none"/>
<ellipse cx="29.3" cy="45" rx="3" ry="6.5" fill="#d3a187"/>
<ellipse cx="70.7" cy="45" rx="3" ry="6.5" fill="#d3a187"/>
<ellipse cx="50" cy="45" rx="19.8" ry="25" fill="url(#skc3)"/>
<path d="M31,53 C33,66 42,71 50,71 C58,71 67,66 69,53 C67,61 60,66 50,66 C40,66 33,61 31,53Z" fill="#9c7866" opacity=".5"/>
<path d="M28.3,45 C23,16 37,4.5 51,4.5 C67,4.5 78,16 71.7,45 C71.5,35 67.5,28.5 60,25.5 C52,23.5 42,24 36,27.5 C31.5,31 29,38 28.3,45Z" fill="#1f1918"/>
<ellipse cx="40.5" cy="40.8" rx="3.8" ry="1.7" fill="#2a1d18"/>
<ellipse cx="59.8" cy="40.8" rx="3.8" ry="1.7" fill="#2a1d18"/>
<path d="M34,35.8 Q40.5,32.3 46.5,35.6" stroke="#231814" stroke-width="2.3" fill="none"/>
<path d="M53.5,35.6 Q59.8,32.3 66,35.8" stroke="#231814" stroke-width="2.3" fill="none"/>
<path d="M48.5,40 L47,50 Q50,52 53,50" stroke="#b88a72" stroke-width="1.2" fill="none" opacity=".8"/>
<path d="M43.5,59.3 Q50,61.8 56.5,59.3" stroke="#a0564c" stroke-width="1.8" fill="none"/>
</g>
</g></g></g>
<circle cx="16" cy="16" r="13.2" fill="none" stroke="#55c2b4" stroke-width="1.1"/>
</svg>
<div class="ovc abs" style="top:130px;font-size:10px;color:#f0f0f0;letter-spacing:-.15px;">Dadparvar</div>
<div class="ovc abs" style="top:141.8px;font-size:7.5px;font-weight:bold;color:#fff;letter-spacing:-.45px;">Third Category</div>
<svg class="abs" style="left:52px;top:152px" width="72" height="15" viewBox="0 0 72 15"><path d="M7.50,0.90 L9.12,5.57 L14.06,5.67 L10.12,8.65 L11.56,13.38 L7.50,10.56 L3.44,13.38 L4.88,8.65 L0.94,5.67 L5.88,5.57Z" fill="#fcee8a" stroke="#e2b840" stroke-width=".7" stroke-opacity=".8"/><path d="M21.10,0.90 L22.72,5.57 L27.66,5.67 L23.72,8.65 L25.16,13.38 L21.10,10.56 L17.04,13.38 L18.48,8.65 L14.54,5.67 L19.48,5.57Z" fill="#fcee8a" stroke="#e2b840" stroke-width=".7" stroke-opacity=".8"/><path d="M34.70,0.90 L36.32,5.57 L41.26,5.67 L37.32,8.65 L38.76,13.38 L34.70,10.56 L30.64,13.38 L32.08,8.65 L28.14,5.67 L33.08,5.57Z" fill="#fcee8a" stroke="#e2b840" stroke-width=".7" stroke-opacity=".8"/><path d="M48.30,0.90 L49.92,5.57 L54.86,5.67 L50.92,8.65 L52.36,13.38 L48.30,10.56 L44.24,13.38 L45.68,8.65 L41.74,5.67 L46.68,5.57Z" fill="#fcee8a" stroke="#e2b840" stroke-width=".7" stroke-opacity=".8"/><path d="M61.90,0.90 L63.52,5.57 L68.46,5.67 L64.52,8.65 L65.96,13.38 L61.90,10.56 L57.84,13.38 L59.28,8.65 L55.34,5.67 L60.28,5.57Z" fill="#fcee8a" stroke="#e2b840" stroke-width=".7" stroke-opacity=".8"/></svg>

</div>
<div class="cb abs"></div>
<div class="chk abs"></div>
<span class="t ctitle" style="left:16px;top:176px;letter-spacing:-0.59px;">[HA] Download Loading Page</span>
<span class="t csub" style="left:3px;top:187.5px;letter-spacing:-0.105px;">Display a page and timer before the user be able t...</span>
<svg class="abs" style="left:23px;top:203px" width="11" height="10" viewBox="0 0 11 10"><path d="M4,0 H7 V3.6 H9.3 L5.5,7.3 L1.7,3.6 H4Z" fill="#176093"/><path d="M0.3,6.6 H2.6 L4.2,8.1 H6.8 L8.4,6.6 H10.7 V9.8 H0.3Z" fill="#176093"/></svg><span class="t cnum" style="left:35.6px;top:204px;">1</span>
<svg class="abs" style="left:77.4px;top:203px" width="11" height="10" viewBox="0 0 11 10"><path d="M5.50,-0.20 L6.91,3.46 L10.83,3.67 L7.78,6.14 L8.79,9.93 L5.50,7.80 L2.21,9.93 L3.22,6.14 L0.17,3.67 L4.09,3.46Z" fill="#176093"/></svg><span class="t cnum" style="left:90.6px;top:204px;">1</span>
<svg class="abs" style="left:131.5px;top:203px" width="12" height="10" viewBox="0 0 12 10"><path d="M8,1 H2.4 Q1,1 1,2.4 V7.8 Q1,9.2 2.4,9.2 H7.6 Q9,9.2 9,7.8 V6" fill="none" stroke="#6a7f90" stroke-width="1.1"/><path d="M4.2,6.9 L4.6,5 L9.4,0.3 L11,1.9 L6.2,6.6Z" fill="#2b5a8c"/></svg><span class="t cnum" style="left:145px;top:204px;">1</span>
<div class="cfoot abs">
<span class="btn ver" style="padding-right:4px;"><svg class="abs" style="left:3.6px;top:1.4px" width="6.6" height="6.6" viewBox="0 0 8 8"><circle cx="4" cy="4" r="3.2" fill="none" stroke="#3d5a73" stroke-width="1"/><path d="M4,2.2 V4.2 H5.4" stroke="#3d5a73" stroke-width=".9" fill="none"/></svg><span class="bt" style="margin-left:11.8px;letter-spacing:.1px;">1.1.1</span></span>
<span class="btn date" style="padding-right:3.4px;"><svg class="abs" style="left:2.6px;top:0.8px" width="8" height="8" viewBox="0 0 8 8"><rect x=".5" y="1.3" width="7" height="6.2" fill="#eef4f9" stroke="#587890" stroke-width="1"/><rect x=".5" y="1.3" width="7" height="1.8" fill="#587890"/><rect x="1.8" y="0" width="1" height="2" fill="#587890"/><rect x="5.2" y="0" width="1" height="2" fill="#587890"/></svg><span class="bt" style="margin-left:13.4px;letter-spacing:-.1px;">Tuesday at 8:34 PM</span></span>
</div>
</div>
<span class="t" style="left:708px;top:431px;font-size:8.5px;color:#3d5a78;letter-spacing:-.3px;">Selected Resources: 0</span>
<div class="bc abs" style="top:458px;width:952px;">
<span class="t" style="left:7px;">Home</span>
<svg class="abs" style="left:36px;top:0" width="10" height="18" viewBox="0 0 10 18"><path d="M0,0 L8.5,9 L0,18" fill="none" stroke="#c6dff0" stroke-width="1"/></svg>
<span class="t" style="left:49px;letter-spacing:-.52px;">Resources</span>
<svg class="abs" style="left:92px;top:0" width="10" height="18" viewBox="0 0 10 18"><path d="M0,0 L8.5,9 L0,18" fill="none" stroke="#c6dff0" stroke-width="1"/></svg>
<span class="t" style="left:106px;font-weight:bold;letter-spacing:-.35px;">Authors</span>
<svg class="abs" style="left:144px;top:0" width="10" height="18" viewBox="0 0 10 18"><path d="M0,0 L8.5,9 L0,18" fill="none" stroke="#c6dff0" stroke-width="1"/></svg>
<svg class="abs" style="left:939.2px;top:4.5px" width="9.4" height="9.4" viewBox="0 0 10 10"><rect x=".5" y=".5" width="9" height="9" rx="1.5" fill="#e4eff8" stroke="#a5cae4"/><path d="M3,7.5 L7,3.2 M4.2,2.8 H7.4 V6" stroke="#176093" stroke-width="1.5" fill="none"/></svg>
</div>

<!-- sidebar -->
<div id="searchwrap" class="abs"><div id="searchbox" class="abs"><span class="t" style="left:2px;top:4px;font-size:8.5px;font-style:italic;color:#969696;">Search...</span></div></div>
<div class="sblock abs" style="left:795px;top:111px;width:188px;height:57px;"></div>
<div id="bigav" class="abs">
<svg class="abs" style="left:0;top:0" width="74" height="74" viewBox="0 0 74 74">
<defs><clipPath id="cbig"><circle cx="37.5" cy="37" r="33.5"/></clipPath></defs>
<g clip-path="url(#cbig)"><g transform="translate(3,3.5) scale(0.69)">
<g>
<defs><filter id="fbbig" x="-10%" y="-10%" width="120%" height="120%"><feGaussianBlur stdDeviation="0.9"/></filter>
<radialGradient id="skbig" cx=".5" cy=".42" r=".62"><stop offset="0" stop-color="#ecc8b3"/><stop offset=".7" stop-color="#e0b39a"/><stop offset="1" stop-color="#c99a82"/></radialGradient></defs>
<rect x="-10" y="-10" width="120" height="120" fill="#fbfaf9"/>
<g filter="url(#fbbig)">
<path d="M2,106 C4,84 20,78 38,73 L62,73 C80,78 96,84 98,106Z" fill="#f0dfd1"/>
<path d="M38,72 L50,91 L62,72 L58,60 L42,60Z" fill="#d3a88c"/>
<path d="M37,70 L50,93 L42,102 L27,78Z" fill="#f7eee6"/>
<path d="M63,70 L50,93 L58,102 L73,78Z" fill="#f7eee6"/>
<path d="M37,70 L50,93 L63,70" stroke="#d9c4b2" stroke-width="1" fill="none"/>
<ellipse cx="29.3" cy="45" rx="3" ry="6.5" fill="#d3a187"/>
<ellipse cx="70.7" cy="45" rx="3" ry="6.5" fill="#d3a187"/>
<ellipse cx="50" cy="45" rx="19.8" ry="25" fill="url(#skbig)"/>
<path d="M31,53 C33,66 42,71 50,71 C58,71 67,66 69,53 C67,61 60,66 50,66 C40,66 33,61 31,53Z" fill="#9c7866" opacity=".5"/>
<path d="M28.3,45 C23,16 37,4.5 51,4.5 C67,4.5 78,16 71.7,45 C71.5,35 67.5,28.5 60,25.5 C52,23.5 42,24 36,27.5 C31.5,31 29,38 28.3,45Z" fill="#1f1918"/>
<ellipse cx="40.5" cy="40.8" rx="3.8" ry="1.7" fill="#2a1d18"/>
<ellipse cx="59.8" cy="40.8" rx="3.8" ry="1.7" fill="#2a1d18"/>
<path d="M34,35.8 Q40.5,32.3 46.5,35.6" stroke="#231814" stroke-width="2.3" fill="none"/>
<path d="M53.5,35.6 Q59.8,32.3 66,35.8" stroke="#231814" stroke-width="2.3" fill="none"/>
<path d="M48.5,40 L47,50 Q50,52 53,50" stroke="#b88a72" stroke-width="1.2" fill="none" opacity=".8"/>
<path d="M43.5,59.3 Q50,61.8 56.5,59.3" stroke="#a0564c" stroke-width="1.8" fill="none"/>
</g>
</g></g></g>
<circle cx="37.5" cy="37" r="34" fill="none" stroke="#3cb58c" stroke-width="1.6"/>
</svg>
</div>
<span class="t" style="left:883px;top:119px;font-size:12px;font-weight:bold;color:#2b5a8c;letter-spacing:-.7px;">Dadparvar</span>
<span class="t sl" style="left:883px;top:134px;">Messages:</span><span class="t sv" style="right:49px;top:134px;">5</span>
<span class="t sl" style="left:883px;top:143px;">Likes:</span><span class="t sv" style="right:49px;top:143px;">2</span>
<span class="t sl" style="left:883px;top:152px;">Points:</span><span class="t sv" style="right:49px;top:152px;">3</span>

<div class="sblock abs" style="left:795px;top:205px;width:188px;height:88px;"></div>
<span class="t" style="left:802px;top:213.7px;font-size:12px;color:#6cb2e4;">Author Details</span>
<div class="abs" style="left:802px;top:228px;width:173px;height:1px;background:#d7edfc;"></div>
<span class="t sl2" style="left:802px;top:235.5px;">Author:</span><span class="t sv2" style="right:49px;top:235.5px;color:#2b5a8c;">Dadparvar</span>
<span class="t sl2" style="left:802px;top:247.5px;">Resources:</span><span class="t sv2" style="right:49px;top:247.5px;">4</span>
<span class="t sl2" style="left:802px;top:259.7px;">Average Rating:</span>
<svg class="abs" style="left:906px;top:256px" width="70" height="15" viewBox="0 0 70 15"><defs><linearGradient id="sgd" x1="0" y1="1" x2="1" y2="0"><stop offset="0" stop-color="#fbf2a4"/><stop offset=".55" stop-color="#f3dc68"/><stop offset="1" stop-color="#c99a2a"/></linearGradient></defs><path d="M8.00,1.40 L9.55,5.86 L14.28,5.96 L10.51,8.82 L11.88,13.34 L8.00,10.64 L4.12,13.34 L5.49,8.82 L1.72,5.96 L6.45,5.86Z" fill="url(#sgd)" stroke="#d2a93e" stroke-width=".7" stroke-opacity=".75"/><path d="M21.40,1.40 L22.95,5.86 L27.68,5.96 L23.91,8.82 L25.28,13.34 L21.40,10.64 L17.52,13.34 L18.89,8.82 L15.12,5.96 L19.85,5.86Z" fill="url(#sgd)" stroke="#d2a93e" stroke-width=".7" stroke-opacity=".75"/><path d="M34.80,1.40 L36.35,5.86 L41.08,5.96 L37.31,8.82 L38.68,13.34 L34.80,10.64 L30.92,13.34 L32.29,8.82 L28.52,5.96 L33.25,5.86Z" fill="url(#sgd)" stroke="#d2a93e" stroke-width=".7" stroke-opacity=".75"/><path d="M48.20,1.40 L49.75,5.86 L54.48,5.96 L50.71,8.82 L52.08,13.34 L48.20,10.64 L44.32,13.34 L45.69,8.82 L41.92,5.96 L46.65,5.86Z" fill="url(#sgd)" stroke="#d2a93e" stroke-width=".7" stroke-opacity=".75"/><path d="M61.60,1.40 L63.15,5.86 L67.88,5.96 L64.11,8.82 L65.48,13.34 L61.60,10.64 L57.72,13.34 L59.09,8.82 L55.32,5.96 L60.05,5.86Z" fill="url(#sgd)" stroke="#d2a93e" stroke-width=".7" stroke-opacity=".75"/></svg>
<span class="t sl2" style="left:802px;top:274.7px;">Last Update:</span><span class="t sv2" style="right:49px;top:274.7px;">Today at 8:40 AM</span>

<div id="sb" class="abs"><div id="sbthumb" class="abs"></div>
<svg class="abs" style="left:3.2px;top:5px" width="5.4" height="3" viewBox="0 0 7 4"><path d="M0,4 L3.5,0 L7,4Z" fill="#a3a3a3"/></svg>
<svg class="abs" style="left:3.2px;top:471.5px" width="5.4" height="3" viewBox="0 0 7 4"><path d="M0,0 L3.5,4 L7,0Z" fill="#505050"/></svg>
</div>
</body>
</html>
